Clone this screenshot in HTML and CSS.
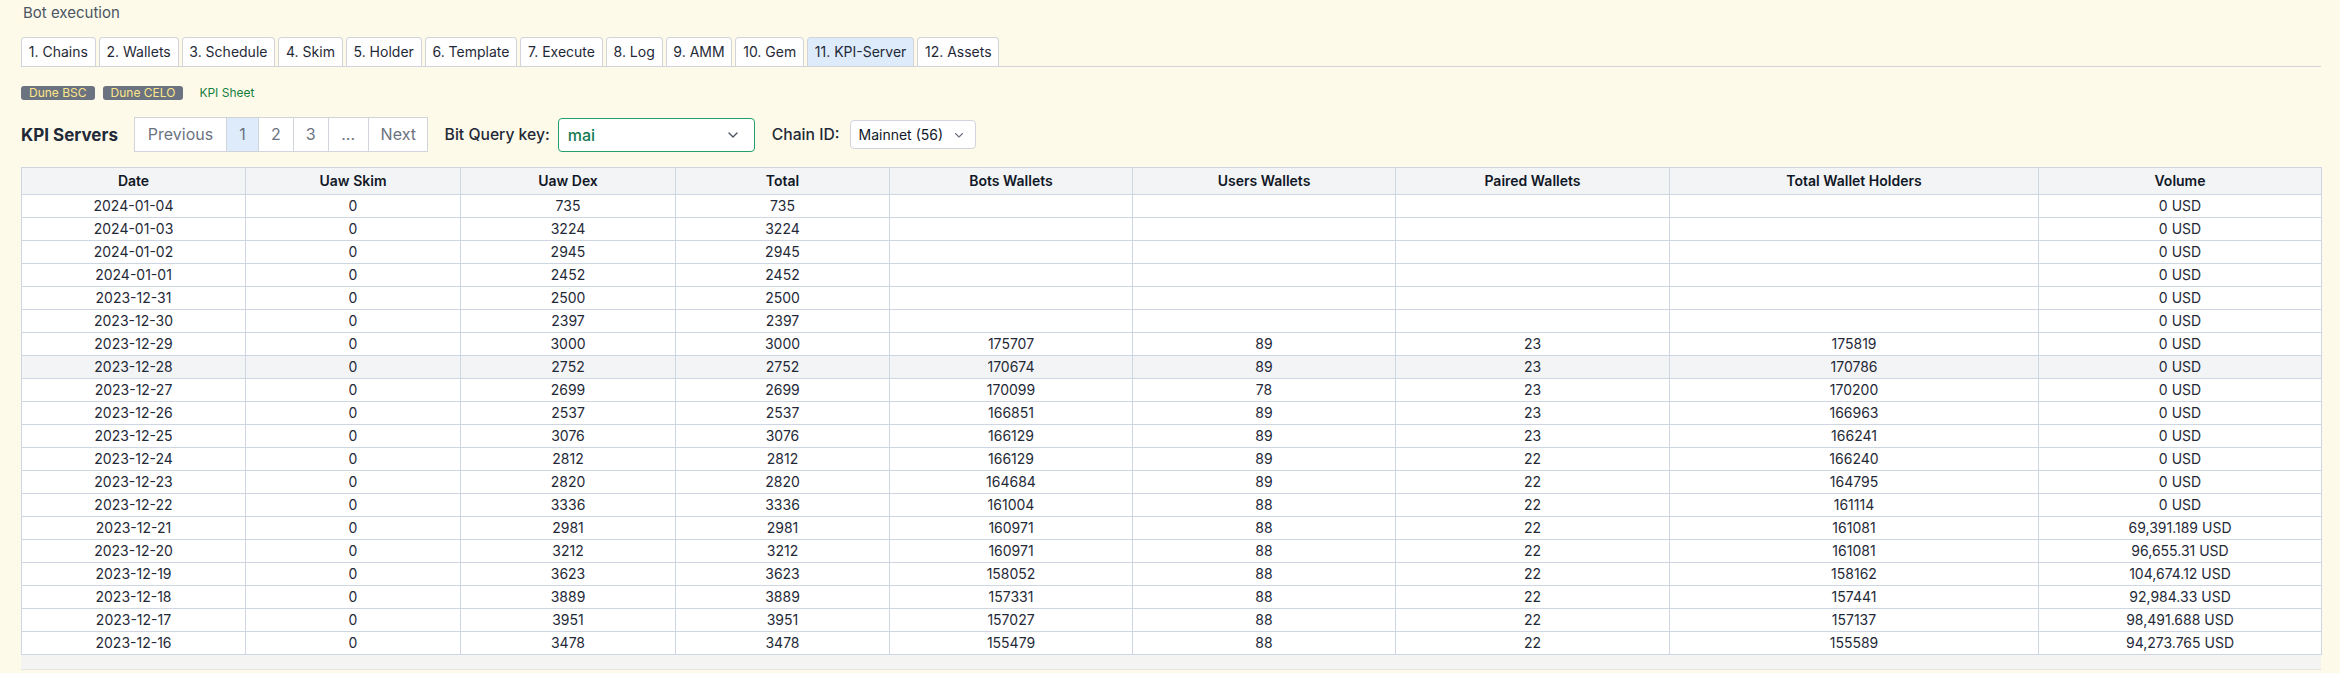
FILE: index.html
```html
<!DOCTYPE html>
<html lang="en">
<head>
<meta charset="utf-8">
<title>Bot execution</title>
<link rel="stylesheet" href="styles.css">
</head>
<body>
<div class="page">
  <div class="title">Bot execution</div>

  <ul class="tabs">
    <li class="tab">1. Chains</li>
    <li class="tab">2. Wallets</li>
    <li class="tab">3. Schedule</li>
    <li class="tab">4. Skim</li>
    <li class="tab">5. Holder</li>
    <li class="tab">6. Template</li>
    <li class="tab">7. Execute</li>
    <li class="tab">8. Log</li>
    <li class="tab">9. AMM</li>
    <li class="tab">10. Gem</li>
    <li class="tab tab-active">11. KPI-Server</li>
    <li class="tab">12. Assets</li>
  </ul>

  <div class="links">
    <span class="badge">Dune BSC</span>
    <span class="badge">Dune CELO</span>
    <a class="sheet-link">KPI Sheet</a>
  </div>

  <div class="toolbar">
    <div class="heading">KPI Servers</div>
    <div class="pager">
      <span class="pg pg-prev">Previous</span>
      <span class="pg pg-active">1</span>
      <span class="pg">2</span>
      <span class="pg">3</span>
      <span class="pg pg-dots">...</span>
      <span class="pg pg-next">Next</span>
    </div>
    <div class="field">
      <span class="field-label">Bit Query key:</span>
      <div class="select select-key">
        <span class="select-value">mai</span>
        <svg class="chev" width="14" height="14" viewBox="0 0 14 14"><path d="M3 5l4 4 4-4" fill="none" stroke="currentColor" stroke-width="1.4" stroke-linecap="round" stroke-linejoin="round"/></svg>
      </div>
    </div>
    <div class="field field-chain">
      <span class="field-label">Chain ID:</span>
      <div class="select select-chain">
        <span class="select-value">Mainnet (56)</span>
        <svg class="chev" width="12" height="12" viewBox="0 0 12 12"><path d="M2.5 4.5l3.5 3.5 3.5-3.5" fill="none" stroke="currentColor" stroke-width="1.1" stroke-linecap="round" stroke-linejoin="round"/></svg>
      </div>
    </div>
  </div>

  <div class="table-wrap">
    <table class="kpi">
      <colgroup>
        <col class="c1"><col class="c2"><col class="c3"><col class="c4"><col class="c5"><col class="c6"><col class="c7"><col class="c8"><col class="c9">
      </colgroup>
      <thead>
        <tr><th>Date</th><th>Uaw Skim</th><th>Uaw Dex</th><th>Total</th><th>Bots Wallets</th><th>Users Wallets</th><th>Paired Wallets</th><th>Total Wallet Holders</th><th>Volume</th></tr>
      </thead>
      <tbody>
        <tr><td>2024-01-04</td><td>0</td><td>735</td><td>735</td><td></td><td></td><td></td><td></td><td>0 USD</td></tr>
        <tr><td>2024-01-03</td><td>0</td><td>3224</td><td>3224</td><td></td><td></td><td></td><td></td><td>0 USD</td></tr>
        <tr><td>2024-01-02</td><td>0</td><td>2945</td><td>2945</td><td></td><td></td><td></td><td></td><td>0 USD</td></tr>
        <tr><td>2024-01-01</td><td>0</td><td>2452</td><td>2452</td><td></td><td></td><td></td><td></td><td>0 USD</td></tr>
        <tr><td>2023-12-31</td><td>0</td><td>2500</td><td>2500</td><td></td><td></td><td></td><td></td><td>0 USD</td></tr>
        <tr><td>2023-12-30</td><td>0</td><td>2397</td><td>2397</td><td></td><td></td><td></td><td></td><td>0 USD</td></tr>
        <tr><td>2023-12-29</td><td>0</td><td>3000</td><td>3000</td><td>175707</td><td>89</td><td>23</td><td>175819</td><td>0 USD</td></tr>
        <tr class="row-hover"><td>2023-12-28</td><td>0</td><td>2752</td><td>2752</td><td>170674</td><td>89</td><td>23</td><td>170786</td><td>0 USD</td></tr>
        <tr><td>2023-12-27</td><td>0</td><td>2699</td><td>2699</td><td>170099</td><td>78</td><td>23</td><td>170200</td><td>0 USD</td></tr>
        <tr><td>2023-12-26</td><td>0</td><td>2537</td><td>2537</td><td>166851</td><td>89</td><td>23</td><td>166963</td><td>0 USD</td></tr>
        <tr><td>2023-12-25</td><td>0</td><td>3076</td><td>3076</td><td>166129</td><td>89</td><td>23</td><td>166241</td><td>0 USD</td></tr>
        <tr><td>2023-12-24</td><td>0</td><td>2812</td><td>2812</td><td>166129</td><td>89</td><td>22</td><td>166240</td><td>0 USD</td></tr>
        <tr><td>2023-12-23</td><td>0</td><td>2820</td><td>2820</td><td>164684</td><td>89</td><td>22</td><td>164795</td><td>0 USD</td></tr>
        <tr><td>2023-12-22</td><td>0</td><td>3336</td><td>3336</td><td>161004</td><td>88</td><td>22</td><td>161114</td><td>0 USD</td></tr>
        <tr><td>2023-12-21</td><td>0</td><td>2981</td><td>2981</td><td>160971</td><td>88</td><td>22</td><td>161081</td><td>69,391.189 USD</td></tr>
        <tr><td>2023-12-20</td><td>0</td><td>3212</td><td>3212</td><td>160971</td><td>88</td><td>22</td><td>161081</td><td>96,655.31 USD</td></tr>
        <tr><td>2023-12-19</td><td>0</td><td>3623</td><td>3623</td><td>158052</td><td>88</td><td>22</td><td>158162</td><td>104,674.12 USD</td></tr>
        <tr><td>2023-12-18</td><td>0</td><td>3889</td><td>3889</td><td>157331</td><td>88</td><td>22</td><td>157441</td><td>92,984.33 USD</td></tr>
        <tr><td>2023-12-17</td><td>0</td><td>3951</td><td>3951</td><td>157027</td><td>88</td><td>22</td><td>157137</td><td>98,491.688 USD</td></tr>
        <tr><td>2023-12-16</td><td>0</td><td>3478</td><td>3478</td><td>155479</td><td>88</td><td>22</td><td>155589</td><td>94,273.765 USD</td></tr>
      </tbody>
    </table>
    <div class="scroll-track"></div>
  </div>
</div>
</body>
</html>
```

FILE: styles.css
```css
* { box-sizing: border-box; }

html, body {
  margin: 0;
  padding: 0;
  background: #fefaea;
}

body {
  font-family: Inter, "Noto Sans", "Liberation Sans", sans-serif;
  color: #1f2937;
}

.page {
  padding: 3px 19px 0 21px;
}

.title {
  font-size: 15px;
  line-height: 20px;
  color: #4b5563;
  padding-left: 2px;
}

.tabs {
  list-style: none;
  margin: 14px 0 0 0;
  padding: 0;
  display: flex;
  gap: 3px;
  border-bottom: 1px solid #d1d5db;
}

.tab {
  background: #ffffff;
  border: 1px solid #d1d5db;
  border-bottom: none;
  border-radius: 4px 4px 0 0;
  font-size: 14px;
  line-height: 28px;
  padding: 0 6.8px;
  color: #1f2937;
}

.tab-active {
  background: #deebfb;
}

.links {
  display: flex;
  align-items: center;
  gap: 8px;
  margin-top: 19px;
  height: 14px;
}

.badge {
  background: #6b7280;
  color: #fde68a;
  font-size: 12px;
  line-height: 14px;
  padding: 0 8px;
  border-radius: 3px;
}

.sheet-link {
  color: #15803d;
  font-size: 12px;
  line-height: 14px;
  margin-left: 8px;
  text-decoration: none;
}

.toolbar {
  display: flex;
  align-items: center;
  gap: 16px;
  margin-top: 17px;
  height: 35px;
}

.heading {
  font-size: 17px;
  font-weight: 700;
  color: #1f2937;
}

.pager {
  display: flex;
  border: 1px solid #d1d5db;
  background: #ffffff;
  height: 35px;
}

.pg {
  font-size: 16px;
  line-height: 33px;
  color: #6b7280;
  padding: 0 12px;
  border-left: 1px solid #d1d5db;
  text-align: center;
}

.pg-prev { border-left: none; width: 91px; }
.pg-active { background: #deebfb; width: 32px; }
.pg-dots { width: 40px; }
.pg-next { width: 59px; }

.field {
  display: flex;
  align-items: center;
  gap: 8px;
  margin-left: 1px;
}

.field-label {
  font-size: 15.7px;
  font-weight: 500;
  color: #1f2937;
}

.select {
  display: flex;
  align-items: center;
  justify-content: space-between;
  background: #ffffff;
  border-radius: 4px;
}

.select-key {
  width: 197px;
  height: 34px;
  border: 1px solid #22a06b;
  padding: 0 14px 0 9px;
}

.select-key .select-value {
  color: #137a54;
  font-size: 16px;
  font-weight: 500;
}

.select-key .chev { color: #4b5563; }

.field-chain { gap: 10px; }

.select-chain {
  width: 126px;
  height: 29px;
  border: 1px solid #d1d5db;
  padding: 0 10px 0 8px;
}

.select-chain .select-value {
  color: #111827;
  font-size: 14px;
}

.select-chain .chev { color: #6b7280; }

.table-wrap {
  margin-top: 15px;
}

.kpi {
  width: 2300px;
  table-layout: fixed;
  border-collapse: collapse;
  background: #ffffff;
  font-size: 14px;
}

.c1 { width: 224px; }
.c2 { width: 215px; }
.c3 { width: 215px; }
.c4 { width: 214px; }
.c5 { width: 243px; }
.c6 { width: 263px; }
.c7 { width: 274px; }
.c8 { width: 369px; }
.c9 { width: 283px; }

.kpi th,
.kpi td {
  border: 1px solid #cdd6e2;
  text-align: center;
  line-height: 20px;
  white-space: nowrap;
}

.kpi th {
  background: #f3f4f6;
  font-weight: 600;
  color: #111827;
  padding: 3px 8px 3px;
}

.kpi td {
  padding: 1px 8px;
  color: #1f2937;
}

.kpi .row-hover td {
  background: #f3f4f6;
}

.scroll-track {
  width: 2300px;
  height: 15px;
  background: #f4f4f3;
  border-bottom: 1px solid #e6e6e4;
}
```
